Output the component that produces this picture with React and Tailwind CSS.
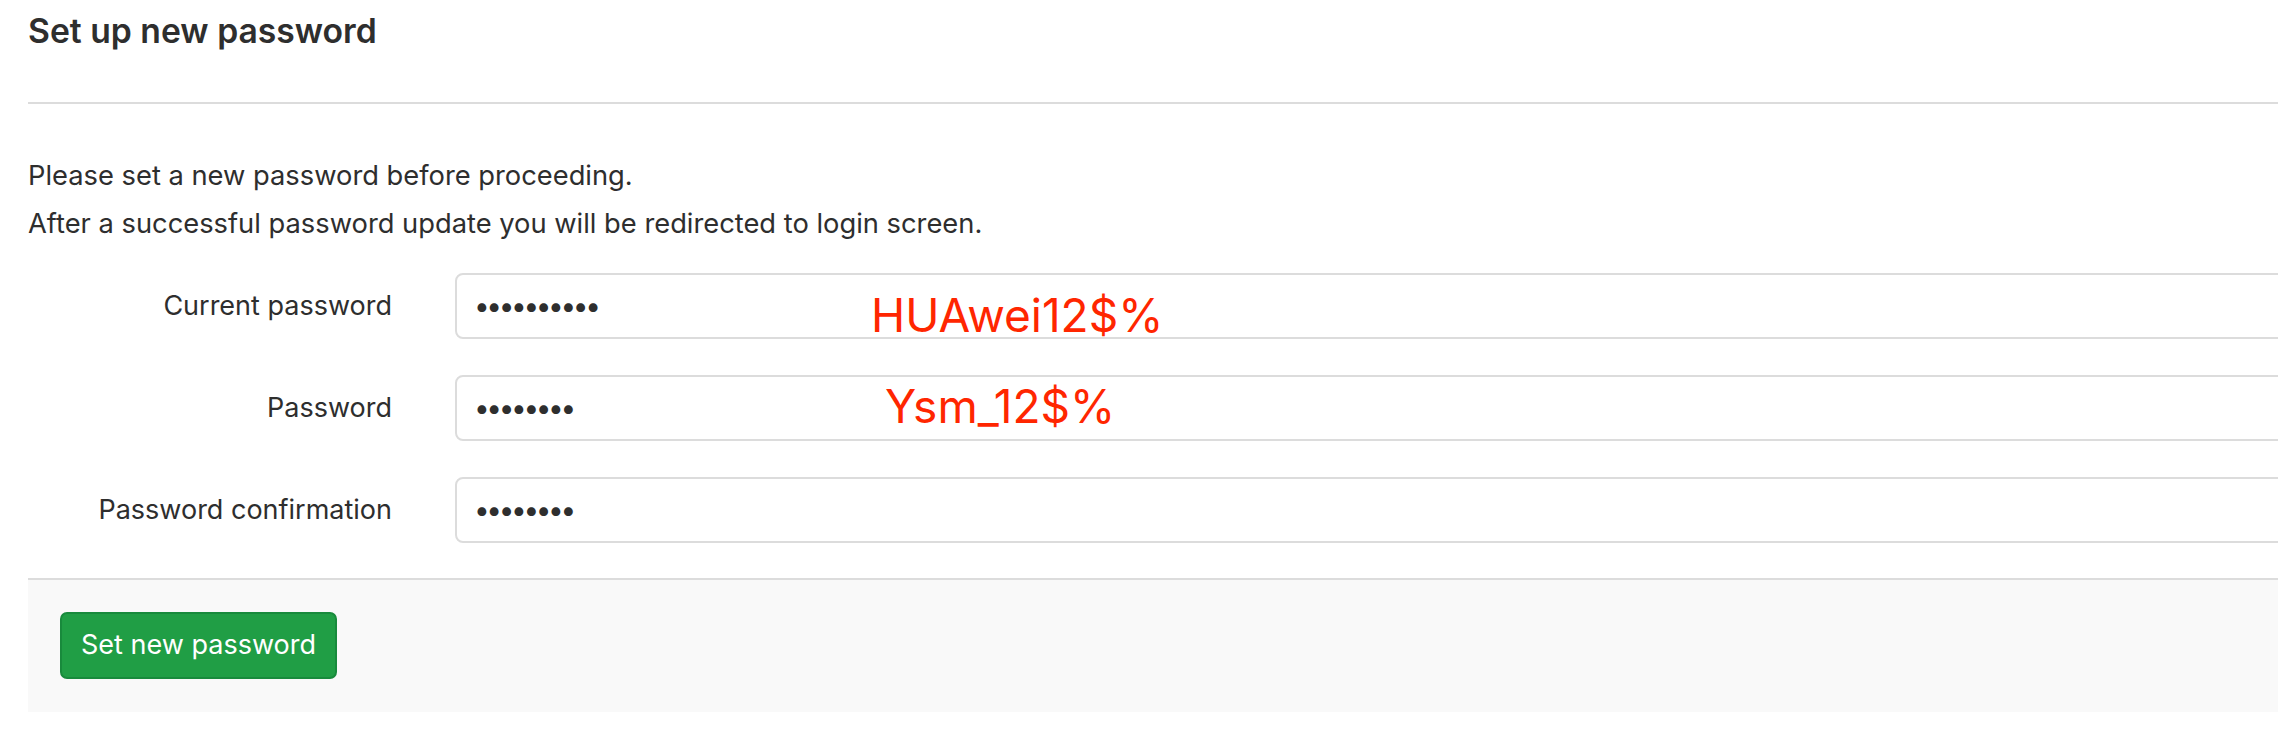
const fields = [
  { label: 'Current password', dots: 10, note: 'HUAwei12$%', noteClass: 'left-[414px] top-[7px]' },
  { label: 'Password', dots: 8, note: 'Ysm_12$%', noteClass: 'left-[428px] top-[-4px]' },
  { label: 'Password confirmation', dots: 8 },
];

function Field({ label, dots, note, noteClass }) {
  return (
    <div className="flex items-center h-[66px]">
      <label className="w-[364px] shrink-0 text-right text-[27px] text-[#2e2e2e]">{label}</label>
      <div className="relative ml-[63px] flex-1 h-[66px] border-2 border-[#dcdcdc] rounded-[8px] flex items-center pl-[17px]">
        <span className="text-[28px] tracking-[-3.4px] text-[#2e2e2e] leading-none">{'•'.repeat(dots)}</span>
        {note && (
          <span className={`absolute ${noteClass} text-[46px] leading-[66px] text-[#ff2600] whitespace-nowrap`}>
            {note}
          </span>
        )}
      </div>
    </div>
  );
}

export default function App() {
  return (
    <div className="w-[2278px] h-[740px] overflow-hidden bg-white" style={{ fontFamily: 'Inter, "Noto Sans", sans-serif' }}>
      <div className="w-[2320px] pl-[28px]">
        <h3 className="h-[61px] pt-[10px] text-[33.7px] font-semibold leading-[42px] text-[#2e2e2e]">Set up new password</h3>
        <div className="mt-[41px] h-[2px] bg-[#dcdcdc]" />
        <div className="pt-[48px] text-[27.3px] leading-[48px] text-[#2e2e2e]">
          <p>Please set a new password before proceeding.</p>
          <p>After a successful password update you will be redirected to login screen.</p>
        </div>
        <div className="mt-[25px] flex flex-col gap-[36px]">
          {fields.map((f) => (
            <Field key={f.label} {...f} />
          ))}
        </div>
        <div className="mt-[35px] border-t-2 border-[#dcdcdc] bg-[#f9f9f9] h-[134px] pt-[32px] pl-[32px]">
          <button className="h-[67px] w-[277px] rounded-[7px] border-2 border-[#188a3c] bg-[#209e45] text-[27px] text-white">
            Set new password
          </button>
        </div>
      </div>
    </div>
  );
}
